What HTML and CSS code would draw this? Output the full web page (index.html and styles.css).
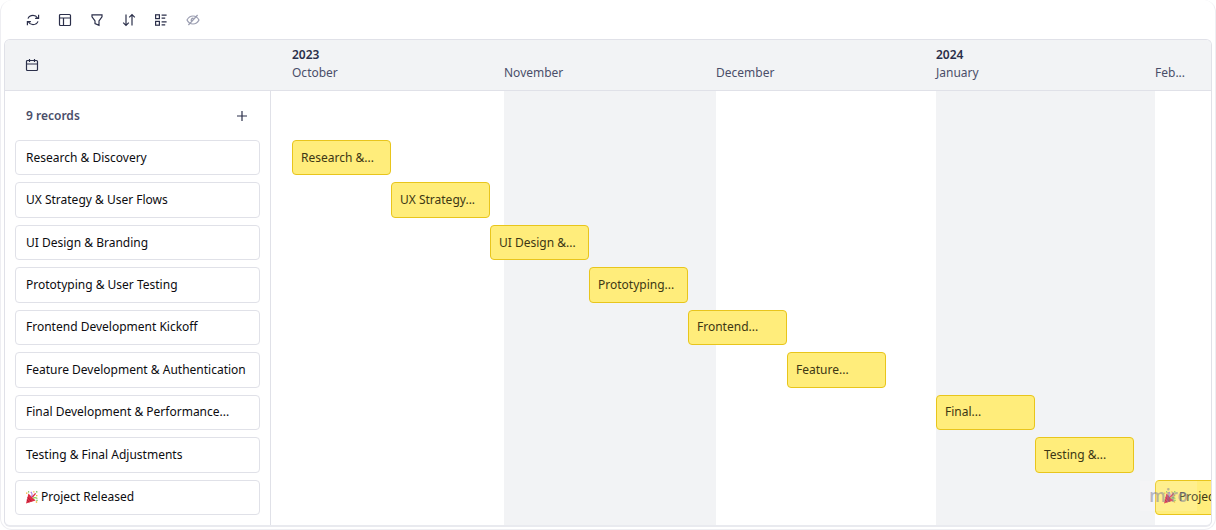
FILE: index.html
```html
<!DOCTYPE html>
<html lang="en">
<head>
<meta charset="utf-8">
<title>Project timeline</title>
<link rel="stylesheet" href="styles.css">
</head>
<body>
<svg class="sprite" aria-hidden="true">
  <symbol id="party" viewBox="0 0 13 13">
    <path d="M3.4 2.6 10.6 9.6 1 12.6Z" fill="#dd2e44"/>
    <path d="M2.6 6.2 6.6 10.4M1.8 9 4.2 11.3" stroke="#a5122b" stroke-width=".8"/>
    <path d="M6.2 5.8C7.6 4.4 7 2 5.8.8" fill="none" stroke="#a77be0" stroke-width="1.2"/>
    <path d="M7.8 7.4c1.4-1 3-1 4.6.2" fill="none" stroke="#8ccf55" stroke-width="1.2"/>
    <path d="M7.4 6 10.6 2.4" stroke="#dd2e44" stroke-width="1.4"/>
    <path d="M1 2.2h1.4M8.2.8h1.2M11 4.6h1.4M10.8 11h1.4" stroke="#f2b632" stroke-width="1.3"/>
    <path d="M3 .8h1.2M11 .8h1.4M11.4 9.4h1.2" stroke="#6abf4b" stroke-width="1.3"/>
  </symbol>
</svg>
<main class="frame">
  <div class="toolbar" role="toolbar" aria-label="View options">
    <button class="tool" aria-label="Sync"><svg class="icon" viewBox="0 0 14 14"><path d="M2 5.6C2.9 3.2 5 2.4 7 2.4c2 0 3.6 1 4.6 2.6M12.6 1.8v3.5H9.1M12 8.4C11.1 10.8 9 11.6 7 11.6c-2 0-3.6-1-4.6-2.6M1.4 12.2V8.7h3.5"/></svg></button>
    <button class="tool" aria-label="Layout"><svg class="icon" viewBox="0 0 14 14"><rect x="1.5" y="1.5" width="11" height="11" rx="1"/><path d="M1.5 5h11M5.5 5v7.5"/></svg></button>
    <button class="tool" aria-label="Filter"><svg class="icon" viewBox="0 0 14 14"><path d="M2 1.8h10v2L9 8v4.4L5 10.6V8L2 3.8Z"/></svg></button>
    <button class="tool" aria-label="Sort"><svg class="icon" viewBox="0 0 14 14"><path d="M4 1.5v11M1.2 9.6 4 12.4l2.8-2.8M10 12.5v-11M7.2 4.4 10 1.6l2.8 2.8"/></svg></button>
    <button class="tool" aria-label="Group"><svg class="icon" viewBox="0 0 14 14"><rect x="1.6" y="1.8" width="3.8" height="3.8"/><rect x="1.6" y="8.4" width="3.8" height="3.8"/><path d="M7.6 2.2h5M7.6 5.2h3.6M7.6 8.8h5M7.6 11.8h3.6"/></svg></button>
    <button class="tool tool-off" aria-label="Hidden fields"><svg class="icon" viewBox="0 0 14 14"><path d="M1 7c1.4-2.6 3.4-4 6-4s4.6 1.4 6 4c-1.4 2.6-3.4 4-6 4S2.4 9.6 1 7ZM2.4 12 11.6 2M5.6 8.4C4.6 7 5.4 5.2 7.4 5.2"/></svg></button>
  </div>

  <section class="board">
    <header class="board-head">
      <div class="corner"><button class="tool" aria-label="Go to date"><svg class="icon" viewBox="0 0 14 14"><rect x="1.5" y="2.5" width="11" height="10" rx="1"/><path d="M1.5 6h11M4.5 1v3M9.5 1v3"/></svg></button></div>
      <div class="months">
        <div class="month"><strong>2023</strong><span>October</span></div>
        <div class="month"><span>November</span></div>
        <div class="month"><span>December</span></div>
        <div class="month"><strong>2024</strong><span>January</span></div>
        <div class="month"><span>Feb...</span></div>
      </div>
    </header>
    <div class="board-body">
      <aside class="records">
        <div class="records-head">
          <h2>9 records</h2>
          <button class="tool" aria-label="Add record"><svg class="icon" viewBox="0 0 14 14"><path d="M7 2v10M2 7h10"/></svg></button>
        </div>
        <ul class="rows">
          <li class="record"><span>Research &amp; Discovery</span></li>
          <li class="record"><span>UX Strategy &amp; User Flows</span></li>
          <li class="record"><span>UI Design &amp; Branding</span></li>
          <li class="record"><span>Prototyping &amp; User Testing</span></li>
          <li class="record"><span>Frontend Development Kickoff</span></li>
          <li class="record"><span>Feature Development &amp; Authentication</span></li>
          <li class="record"><span>Final Development &amp; Performance...</span></li>
          <li class="record"><span>Testing &amp; Final Adjustments</span></li>
          <li class="record"><svg class="emoji" role="img" aria-label="Party popper"><use href="#party"/></svg><span>Project Released</span></li>
        </ul>
      </aside>
      <div class="timeline">
        <div class="stripes" aria-hidden="true"><i></i><i></i><i></i><i></i><i></i></div>
        <ul class="rows bars">
          <li class="bar" style="margin-left:0px"><span>Research &amp;...</span></li>
          <li class="bar" style="margin-left:99px"><span>UX Strategy...</span></li>
          <li class="bar" style="margin-left:198px"><span>UI Design &amp;...</span></li>
          <li class="bar" style="margin-left:297px"><span>Prototyping...</span></li>
          <li class="bar" style="margin-left:396px"><span>Frontend...</span></li>
          <li class="bar" style="margin-left:495px"><span>Feature...</span></li>
          <li class="bar" style="margin-left:644px"><span>Final...</span></li>
          <li class="bar" style="margin-left:743px"><span>Testing &amp;...</span></li>
          <li class="bar" style="margin-left:863px"><svg class="emoji" role="img" aria-label="Party popper"><use href="#party"/></svg><span>Project</span></li>
        </ul>
        <div class="watermark">miro</div>
      </div>
    </div>
  </section>
</main>
</body>
</html>
```
FILE: styles.css
```css
* { box-sizing: border-box; }
body {
  margin: 0;
  background: #fff;
  color: #0c0c10;
  font: 12px/18px "Noto Sans", sans-serif;
}
ul { margin: 0; padding: 0; list-style: none; }
.sprite { position: absolute; width: 0; height: 0; }

.frame {
  min-height: 100vh;
  display: flex;
  flex-direction: column;
  padding: 0 3px 2px;
  border: 1px solid #eeeef2;
  border-top: 0;
  border-radius: 12px;
}
.toolbar {
  display: flex;
  align-items: center;
  gap: 8px;
  height: 39px;
  padding-left: 17px;
}
.tool {
  display: grid;
  place-items: center;
  width: 24px;
  height: 24px;
  padding: 0;
  border: 0;
  background: none;
  color: #2b2f4a;
}
.tool-off { color: #9a9db0; }
.icon {
  width: 14px;
  height: 14px;
  fill: none;
  stroke: currentColor;
  stroke-width: 1.2;
}

.board {
  flex: 1;
  display: flex;
  flex-direction: column;
  border: 1px solid #e0e1e8;
  border-bottom: 2px solid #e9eaef;
  border-radius: 6px;
  overflow: hidden;
}
.board-head {
  display: flex;
  height: 51px;
  border-bottom: 1px solid #e0e1e8;
  background: #f2f3f5;
}
.corner {
  flex: 0 0 266px;
  display: flex;
  align-items: center;
  padding-left: 15px;
}
.months, .stripes {
  flex: 1;
  display: grid;
  grid-template-columns: 233px 212px 220px 219px minmax(0, 1fr);
  min-width: 0;
}
.month {
  display: flex;
  flex-direction: column;
  justify-content: flex-end;
  padding-bottom: 8px;
  color: #4a4e69;
}
.month:first-child { padding-left: 21px; }
.month strong { color: #2b2f4a; font-weight: 600; }

.board-body { flex: 1; display: flex; }
.records {
  flex: none;
  width: 266px;
  display: flex;
  flex-direction: column;
  padding: 0 10px 10px;
  border-right: 1px solid #e0e1e8;
}
.records-head {
  display: flex;
  align-items: center;
  justify-content: space-between;
  height: 49px;
  padding: 0 6px 0 11px;
}
.records-head h2 {
  margin: 0;
  color: #4a4e69;
  font-size: 12px;
  line-height: 18px;
  font-weight: 600;
}
.rows {
  flex: 1;
  display: grid;
  grid-template-columns: minmax(0, 1fr);
  grid-auto-rows: minmax(0, 1fr);
  gap: 7px;
}
.record, .bar {
  display: flex;
  align-items: center;
  border: 1px solid #e0e1e8;
  border-radius: 4px;
  white-space: nowrap;
}
.record { padding: 0 6px 0 10px; }
.emoji { flex: none; width: 13px; height: 13px; margin: 0 3px 0 -1px; }

.timeline {
  position: relative;
  flex: 1;
  display: grid;
  min-width: 0;
  overflow: hidden;
}
.stripes, .bars { grid-area: 1 / 1; }
.stripes i:nth-child(even) { background: #f2f3f5; }
.bars { padding: 49px 0 10px 21px; }
.bar {
  width: 99px;
  padding: 0 8px;
  border-color: #e8c51c;
  background: #ffed7b;
  color: #3d3714;
}
.watermark {
  position: absolute;
  right: 14px;
  bottom: 14px;
  padding: 0 9px;
  background: rgb(255 255 255 / 15%);
  color: rgb(120 120 150 / 50%);
  font: 600 17px/30px "Noto Sans", sans-serif;
}
```
